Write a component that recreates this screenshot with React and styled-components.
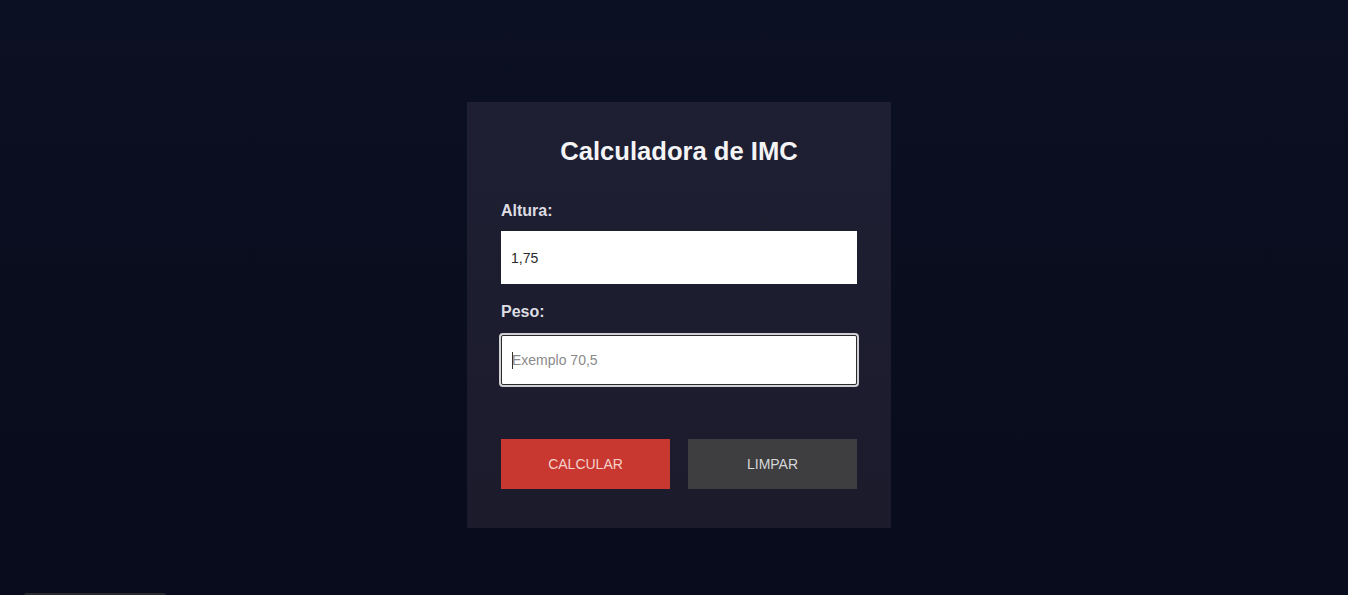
import React from "react";
import styled, { createGlobalStyle } from "styled-components";

const Global = createGlobalStyle`
  html, body { margin: 0; padding: 0; }
  body {
    background: linear-gradient(180deg, #0b1022 0%, #080c1c 100%);
    font-family: "Liberation Sans", Arial, sans-serif;
    height: 595px;
    overflow: hidden;
  }
`;

const Page = styled.main`
  position: relative;
  height: 595px;
  display: flex;
  justify-content: center;
  align-items: flex-start;
  padding: 102px 0 0 10px;
  box-sizing: border-box;
`;

const Card = styled.section`
  width: 424px;
  box-sizing: border-box;
  padding: 35px 34px 39px;
  background: linear-gradient(180deg, #1f1f33 0%, #1b1b2c 100%);
  display: flex;
  flex-direction: column;
`;

const Title = styled.h1`
  margin: 0 0 37px;
  font-size: 25.6px;
  line-height: 28px;
  font-weight: 700;
  color: #f4f4f6;
  text-align: center;
`;

const Field = styled.div`
  display: flex;
  flex-direction: column;
  margin-bottom: ${(p) => p.$mb}px;
`;

const Label = styled.label`
  font-size: 16px;
  line-height: 18px;
  font-weight: 700;
  color: #dcdce2;
  margin-bottom: ${(p) => p.$mb}px;
`;

const InputWrap = styled.div`
  position: relative;
  display: flex;
`;

const Input = styled.input`
  width: 100%;
  height: ${(p) => (p.$focused ? 50 : 53)}px;
  box-sizing: border-box;
  margin: ${(p) => (p.$focused ? "2px 0" : "0")};
  padding: 0 10px;
  border: ${(p) => (p.$focused ? "1px solid #2a2a2a" : "none")};
  border-radius: ${(p) => (p.$focused ? "2px" : "0")};
  box-shadow: ${(p) => (p.$focused ? "0 0 0 2px #cfcfd4" : "none")};
  outline: none;
  background: #ffffff;
  font-family: "Liberation Sans", Arial, sans-serif;
  font-size: 14px;
  color: #2a2a2a;
  &::placeholder { color: #8a8a8a; }
`;

const Caret = styled.span`
  position: absolute;
  left: 11px;
  top: 19px;
  width: 1px;
  height: 17px;
  background: #333;
`;

const Buttons = styled.div`
  display: grid;
  grid-template-columns: 1fr 1fr;
  gap: 18px;
`;

const Button = styled.button`
  height: 50px;
  border: none;
  border-radius: 0;
  background: ${(p) => (p.$variant === "primary" ? "#c93830" : "#3e3e40")};
  color: ${(p) => (p.$variant === "primary" ? "#f3d0cb" : "#d6d6d8")};
  font-family: "Liberation Sans", Arial, sans-serif;
  font-size: 14px;
  text-transform: uppercase;
  cursor: pointer;
`;

const Dock = styled.div`
  position: absolute;
  left: 24px;
  bottom: -3px;
  width: 142px;
  height: 5px;
  border-radius: 3px;
  background: #2a2a2e;
`;

export default function App() {
  return (
    <>
      <Global />
      <Page>
        <Card>
          <Title>Calculadora de IMC</Title>
          <Field $mb={19}>
            <Label htmlFor="altura" $mb={11}>Altura:</Label>
            <InputWrap>
              <Input id="altura" type="text" defaultValue="1,75" />
            </InputWrap>
          </Field>
          <Field $mb={52}>
            <Label htmlFor="peso" $mb={12}>Peso:</Label>
            <InputWrap>
              <Input id="peso" type="text" placeholder="Exemplo 70,5" $focused />
              <Caret />
            </InputWrap>
          </Field>
          <Buttons>
            <Button $variant="primary">Calcular</Button>
            <Button>Limpar</Button>
          </Buttons>
        </Card>
        <Dock />
      </Page>
    </>
  );
}
